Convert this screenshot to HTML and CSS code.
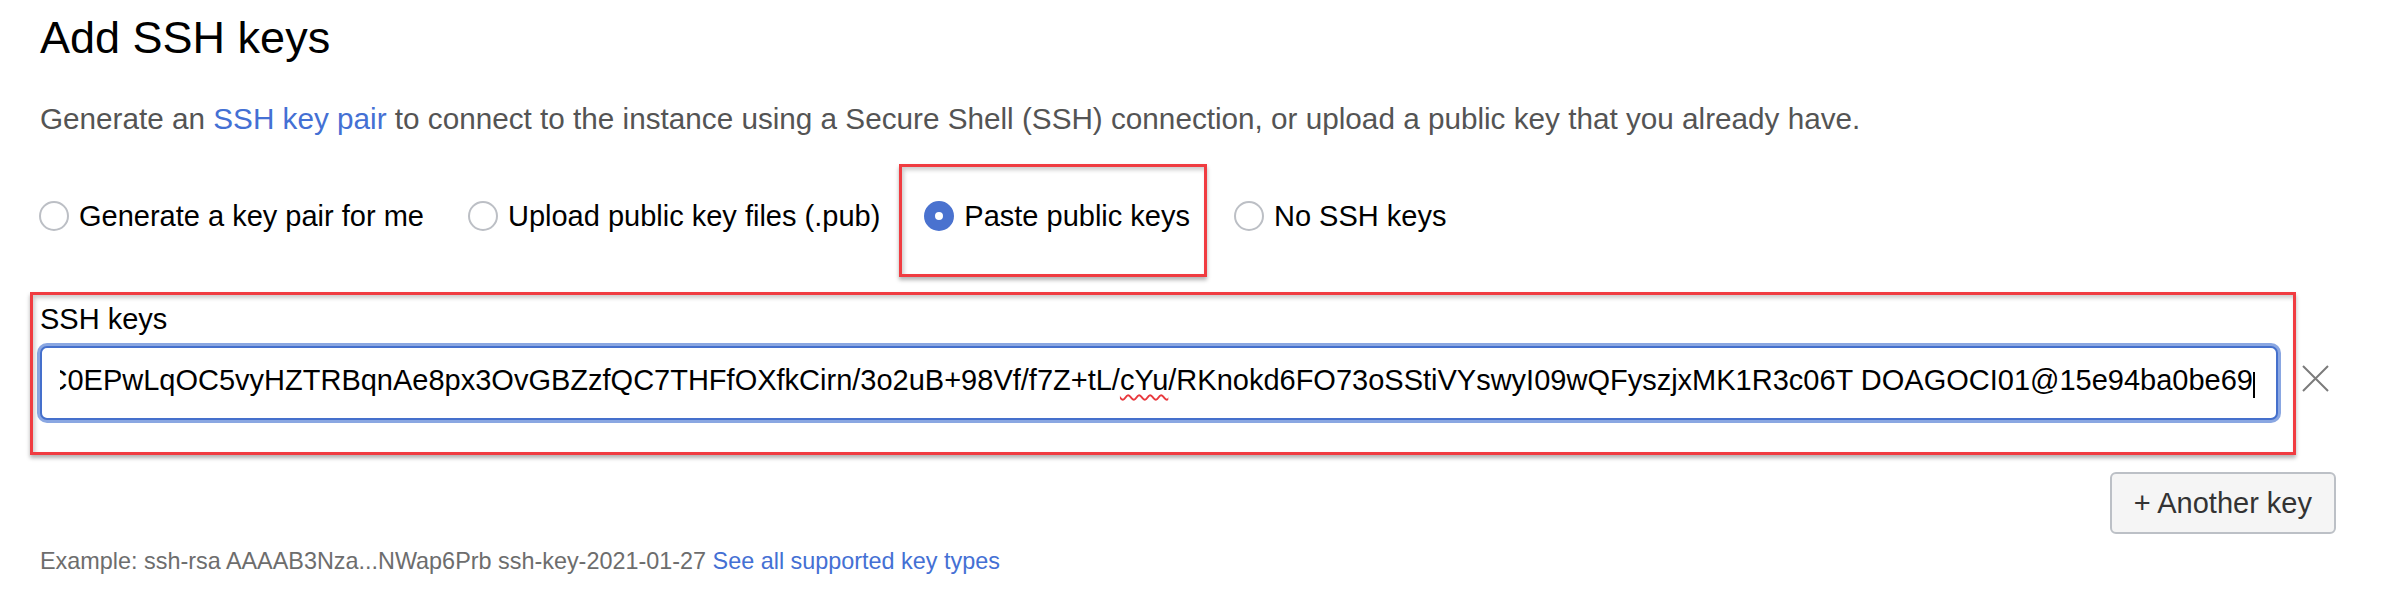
FILE: index.html
```html
<!DOCTYPE html>
<html lang="en">
<head>
<meta charset="utf-8">
<title>Add SSH keys</title>
<link rel="stylesheet" href="styles.css">
</head>
<body>
<main class="page">
  <h1 class="title">Add SSH keys</h1>
  <p class="intro">Generate an <a class="link" href="#">SSH key pair</a> to connect to the instance using a Secure Shell (SSH) connection, or upload a public key that you already have.</p>

  <div class="options">
    <label class="option"><span class="radio"></span><span class="option-text">Generate a key pair for me</span></label>
    <label class="option"><span class="radio"></span><span class="option-text">Upload public key files (.pub)</span></label>
    <label class="option option-marked"><span class="radio radio-on"></span><span class="option-text">Paste public keys</span><span class="mark mark-option"></span></label>
    <label class="option"><span class="radio"></span><span class="option-text">No SSH keys</span></label>
  </div>

  <div class="key-row">
    <div class="field">
      <div class="field-label">SSH keys</div>
      <div class="key-input">
        <div class="key-clip"><span class="key-text">ssh-rsa AAAAB3NzaC1yc2EAAAADAQABAAABgQC0EPwLqOC5vyHZTRBqnAe8px3OvGBZzfQC7THFfOXfkCirn/3o2uB+98Vf/f7Z+tL/<span class="typo">cYu</span>/RKnokd6FO73oSStiVYswyI09wQFyszjxMK1R3c06T DOAGOCI01@15e94ba0be69</span><span class="caret"></span></div>
      </div>
      <span class="mark mark-field"></span>
    </div>
    <svg class="remove" width="27" height="27" viewBox="0 0 27 27" aria-label="Remove key">
      <path d="M1 1 L26 26 M26 1 L1 26" stroke="#7b7b7b" stroke-width="2" fill="none"/>
    </svg>
  </div>

  <div class="actions">
    <button class="btn" type="button">+ Another key</button>
  </div>

  <p class="hint">Example: ssh-rsa AAAAB3Nza...NWap6Prb ssh-key-2021-01-27 <a class="link" href="#">See all supported key types</a></p>
</main>
</body>
</html>
```

FILE: styles.css
```css
* {
  box-sizing: border-box;
}

html, body {
  margin: 0;
  background: #ffffff;
}

body {
  font-family: "Liberation Sans", Arial, sans-serif;
  color: #000000;
}

.page {
  padding: 12px 53px 0 40px;
}

.title {
  margin: 0;
  font-size: 45px;
  line-height: 52px;
  font-weight: 400;
  color: #000000;
}

.intro {
  margin: 35px 0 0;
  font-size: 29.7px;
  line-height: 40px;
  color: #545454;
}

.link {
  color: #4470d4;
  text-decoration: none;
}

.options {
  display: flex;
  gap: 44px;
  margin: 62px 0 0 -1px;
  height: 30px;
}

.option {
  position: relative;
  display: flex;
  align-items: center;
  gap: 10px;
  height: 30px;
  font-size: 29px;
  line-height: 30px;
  color: #000000;
}

.radio {
  flex: none;
  width: 30px;
  height: 30px;
  border-radius: 50%;
  border: 2px solid #bcbfc5;
  background: #ffffff;
}

.radio-on {
  border: 11px solid #4a72cf;
}

.mark {
  position: absolute;
  border: 3px solid #f03c41;
  box-shadow: 0 3px 4px rgba(0, 0, 0, 0.3), inset 2px 3px 4px rgba(0, 0, 0, 0.2);
  pointer-events: none;
}

.mark-option {
  left: -25px;
  right: -17px;
  top: -37px;
  bottom: -46px;
}

.key-row {
  display: flex;
  align-items: flex-end;
  margin-top: 70px;
}

.field {
  position: relative;
  flex: 1;
  min-width: 0;
}

.field-label {
  font-size: 29px;
  line-height: 36px;
  color: #000000;
}

.key-input {
  margin-top: 9px;
  height: 74px;
  border: 2px solid #4570cc;
  border-radius: 7px;
  box-shadow: 0 0 0 3px #8aa7e2;
  padding: 0 21px 6px 18px;
  background: #ffffff;
}

.key-clip {
  display: flex;
  justify-content: flex-end;
  overflow: hidden;
  white-space: nowrap;
  font-size: 29px;
  line-height: 64px;
  color: #000000;
}

.key-text {
  flex: none;
}

.typo {
  text-decoration: underline wavy #e8383d;
  text-decoration-thickness: 2px;
  text-underline-offset: 4px;
}

.caret {
  flex: none;
  display: inline-block;
  width: 2px;
  height: 26px;
  margin-top: 24px;
  background: #000000;
}

.mark-field {
  left: -10px;
  right: -18px;
  top: -9px;
  bottom: -35px;
}

.remove {
  flex: none;
  display: block;
  margin: 0 7px 28px 24px;
}

.actions {
  display: flex;
  justify-content: flex-end;
  margin-top: 52px;
}

.btn {
  height: 62px;
  padding: 0 22px;
  border: 2px solid #bcc0c6;
  border-radius: 6px;
  background: #f5f5f5;
  font-family: "Liberation Sans", Arial, sans-serif;
  font-size: 29px;
  line-height: 58px;
  color: #333333;
}

.hint {
  margin: 12px 0 0;
  font-size: 23.4px;
  line-height: 30px;
  color: #6d6d6d;
}
```
